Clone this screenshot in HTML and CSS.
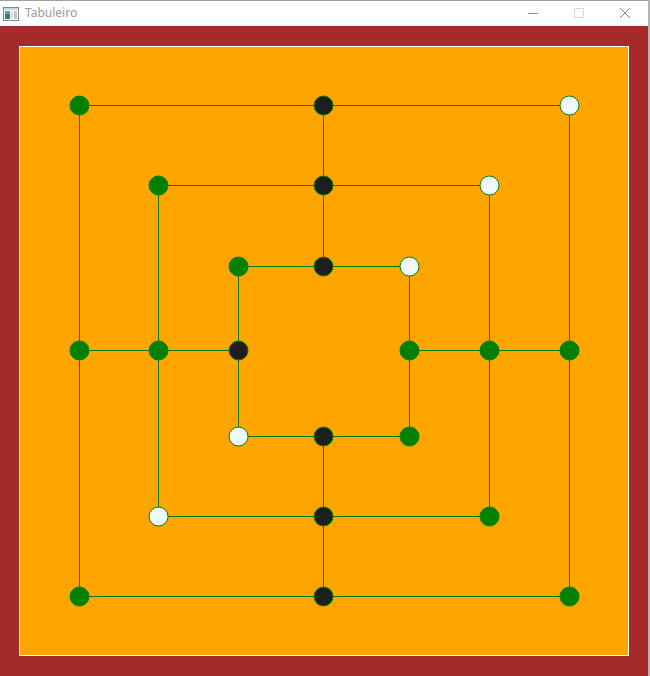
FILE: index.html
```html
<!DOCTYPE html>
<html>
<head>
<meta charset="utf-8">
<title>Tabuleiro</title>
<link rel="stylesheet" href="styles.css">
</head>
<body>
<div class="window">
  <div class="titlebar">
    <div class="title">
      <svg class="app-icon" width="16" height="16" viewBox="0 0 16 16">
        <rect x="0.5" y="1.5" width="15" height="13" fill="#fff" stroke="#7a8a99"/>
        <rect x="1" y="2" width="14" height="2" fill="#c9d6e3"/>
        <rect x="2" y="5" width="5" height="8" fill="#3f7f6a"/>
        <rect x="2" y="5" width="5" height="3" fill="#5f9fc0"/>
        <rect x="8" y="5" width="2" height="8" fill="#d8e2ea"/>
        <rect x="11" y="5" width="3" height="8" fill="#b8c8d6"/>
      </svg>
      <span class="title-text">Tabuleiro</span>
    </div>
    <div class="controls">
      <div class="ctl">
        <svg width="10" height="10" viewBox="0 0 10 10"><line x1="0" y1="5.5" x2="10" y2="5.5" stroke="#8c8c8c" stroke-width="1"/></svg>
      </div>
      <div class="ctl">
        <svg width="10" height="10" viewBox="0 0 10 10"><rect x="0.5" y="0.5" width="9" height="9" fill="none" stroke="#d9d9d9" stroke-width="1"/></svg>
      </div>
      <div class="ctl">
        <svg width="10" height="10" viewBox="0 0 10 10"><path d="M0 0 L10 10 M10 0 L0 10" stroke="#8c8c8c" stroke-width="1"/></svg>
      </div>
    </div>
  </div>
  <div class="client">
    <div class="board">
      <svg width="608" height="608" viewBox="0 0 608 608">
        <g stroke="#0b7a0b" stroke-width="1" fill="none" shape-rendering="crispEdges">
          <rect x="59.5" y="58.5" width="490" height="491"/>
          <rect x="138.5" y="138.5" width="331" height="331"/>
          <rect x="218.5" y="219.5" width="171" height="170"/>
          <line x1="303.5" y1="58.5" x2="303.5" y2="219.5"/>
          <line x1="303.5" y1="389.5" x2="303.5" y2="549.5"/>
          <line x1="59.5" y1="303.5" x2="218.5" y2="303.5"/>
          <line x1="389.5" y1="303.5" x2="549.5" y2="303.5"/>
        </g>
        <g stroke="#008000" stroke-width="1">
          <circle cx="59.5" cy="58.5" r="9.5" class="g"/>
          <circle cx="303.5" cy="58.5" r="9.5" class="b"/>
          <circle cx="549.5" cy="58.5" r="9.5" class="w"/>

          <circle cx="138.5" cy="138.5" r="9.5" class="g"/>
          <circle cx="303.5" cy="138.5" r="9.5" class="b"/>
          <circle cx="469.5" cy="138.5" r="9.5" class="w"/>

          <circle cx="218.5" cy="219.5" r="9.5" class="g"/>
          <circle cx="303.5" cy="219.5" r="9.5" class="b"/>
          <circle cx="389.5" cy="219.5" r="9.5" class="w"/>

          <circle cx="59.5" cy="303.5" r="9.5" class="g"/>
          <circle cx="138.5" cy="303.5" r="9.5" class="g"/>
          <circle cx="218.5" cy="303.5" r="9.5" class="b"/>
          <circle cx="389.5" cy="303.5" r="9.5" class="g"/>
          <circle cx="469.5" cy="303.5" r="9.5" class="g"/>
          <circle cx="549.5" cy="303.5" r="9.5" class="g"/>

          <circle cx="218.5" cy="389.5" r="9.5" class="w"/>
          <circle cx="303.5" cy="389.5" r="9.5" class="b"/>
          <circle cx="389.5" cy="389.5" r="9.5" class="g"/>

          <circle cx="138.5" cy="469.5" r="9.5" class="w"/>
          <circle cx="303.5" cy="469.5" r="9.5" class="b"/>
          <circle cx="469.5" cy="469.5" r="9.5" class="g"/>

          <circle cx="59.5" cy="549.5" r="9.5" class="g"/>
          <circle cx="303.5" cy="549.5" r="9.5" class="b"/>
          <circle cx="549.5" cy="549.5" r="9.5" class="g"/>
        </g>
      </svg>
    </div>
  </div>
</div>
</body>
</html>
```
FILE: styles.css
```css
html, body {
  margin: 0;
  padding: 0;
  background: #a52a2a;
  overflow: hidden;
}

.window {
  width: 650px;
  height: 676px;
  display: flex;
  flex-direction: column;
  box-sizing: border-box;
  border-top: 1px solid #a0a0a0;
  border-right: 2px solid #b4b4b4;
}

.titlebar {
  height: 25px;
  background: #ffffff;
  display: flex;
  align-items: center;
  justify-content: space-between;
  flex-shrink: 0;
}

.title {
  display: flex;
  align-items: center;
  padding-left: 3px;
  gap: 6px;
}

.app-icon {
  display: block;
}

.title-text {
  font-family: "Noto Sans", "Open Sans", sans-serif;
  font-size: 12px;
  color: #999999;
  position: relative;
  top: -1px;
}

.controls {
  display: flex;
  height: 25px;
}

.ctl {
  width: 46px;
  height: 25px;
  display: flex;
  align-items: center;
  justify-content: center;
}

.ctl svg {
  display: block;
  position: relative;
  top: -1px;
}

.client {
  flex: 1;
  background: #a52a2a;
  padding: 20px 0 0 19px;
}

.board {
  width: 608px;
  height: 608px;
  border: 1px solid #ffffff;
  background: #ffa500;
}

.board svg {
  display: block;
}

.g { fill: #008000; }
.b { fill: #1e1e1e; }
.w { fill: #f0f8ff; }
```
